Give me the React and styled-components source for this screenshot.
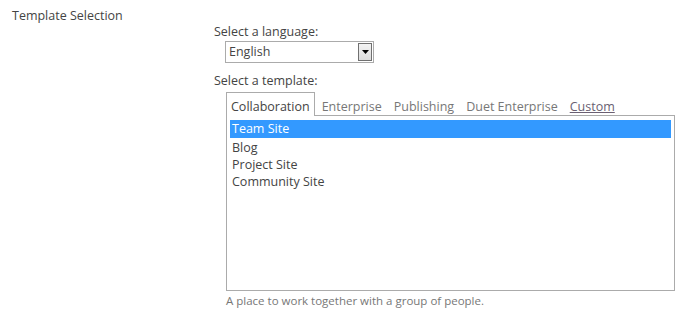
import React from 'react';
import styled, { createGlobalStyle } from 'styled-components';

const GlobalStyle = createGlobalStyle`
  body {
    margin: 0;
    background: #ffffff;
    font-family: "Segoe UI", "Open Sans", "Noto Sans", sans-serif;
  }
`;

const tabs = ['Collaboration', 'Enterprise', 'Publishing', 'Duet Enterprise', 'Custom'];
const templates = ['Team Site', 'Blog', 'Project Site', 'Community Site'];

const App = () => (
  <>
    <GlobalStyle />
    <Section>
      <SectionTitle>Template Selection</SectionTitle>
      <Body>
        <FieldLabel>Select a language:</FieldLabel>
        <SelectBox>
          <SelectValue>English</SelectValue>
          <DropButton>
            <svg width="7" height="4" viewBox="0 0 7 4">
              <path d="M0 0 L7 0 L3.5 4 Z" fill="#000" />
            </svg>
          </DropButton>
        </SelectBox>
        <FieldLabel mtop={9}>Select a template:</FieldLabel>
        <Picker>
          <TabStrip>
            {tabs.map((tab, index) => (
              <Tab key={tab} active={index === 0} link={tab === 'Custom'}>
                {tab}
              </Tab>
            ))}
          </TabStrip>
          <ListBox>
            {templates.map((item, index) => (
              <ListItem key={item} selected={index === 0}>{item}</ListItem>
            ))}
          </ListBox>
          <Description>A place to work together with a group of people.</Description>
        </Picker>
      </Body>
    </Section>
  </>
);

const Section = styled.div`
  display: flex;
  width: 694px;
  height: 316px;
  box-sizing: border-box;
  padding: 7px 0 0 12px;
  color: #444444;
  font-size: 12.5px;
`;

const SectionTitle = styled.div`
  width: 202px;
  line-height: 17px;
`;

const Body = styled.div`
  display: flex;
  flex-direction: column;
  padding-top: 16px;
`;

const FieldLabel = styled.div`
  line-height: 17px;
  margin-top: ${props => props.mtop ? props.mtop : 0}px;
`;

const SelectBox = styled.div`
  display: flex;
  align-items: center;
  justify-content: space-between;
  width: 149px;
  height: 22px;
  box-sizing: border-box;
  margin: 1px 0 0 11px;
  border: 1px solid #ababab;
  padding: 0 1px 0 3px;
  color: #444444;
`;

const SelectValue = styled.span`
  line-height: 18px;
`;

const DropButton = styled.div`
  display: flex;
  align-items: center;
  justify-content: center;
  width: 14px;
  height: 18px;
  box-sizing: border-box;
  border: 1px solid #707070;
  background: linear-gradient(#f2f2f2, #dcdcdc);
`;

const Picker = styled.div`
  display: flex;
  flex-direction: column;
  margin: 3px 0 0 12px;
`;

const TabStrip = styled.div`
  display: flex;
  align-items: flex-start;
  height: 23px;
`;

const Tab = styled.div`
  position: relative;
  z-index: 1;
  box-sizing: border-box;
  height: ${props => props.active ? 24 : 23}px;
  padding: 5px 4px 0 4px;
  margin-right: 2px;
  border: 1px solid ${props => props.active ? '#ababab' : 'transparent'};
  border-bottom: none;
  background: #ffffff;
  color: ${props => props.active ? '#444444' : props.link ? '#6a5f72' : '#777777'};
  text-decoration: ${props => props.link ? 'underline' : 'none'};
  line-height: 17px;
`;

const ListBox = styled.div`
  width: 449px;
  height: 176px;
  box-sizing: border-box;
  border: 1px solid #ababab;
  padding: 4px 3px;
`;

const ListItem = styled.div`
  line-height: ${props => props.selected ? 18 : 17}px;
  margin-bottom: ${props => props.selected ? 1 : 0}px;
  padding-left: 2px;
  color: ${props => props.selected ? '#ffffff' : '#444444'};
  background: ${props => props.selected ? '#3399ff' : 'transparent'};
`;

const Description = styled.div`
  margin-top: 2px;
  font-size: 11.5px;
  line-height: 15px;
  color: #777777;
`;

export default App;
